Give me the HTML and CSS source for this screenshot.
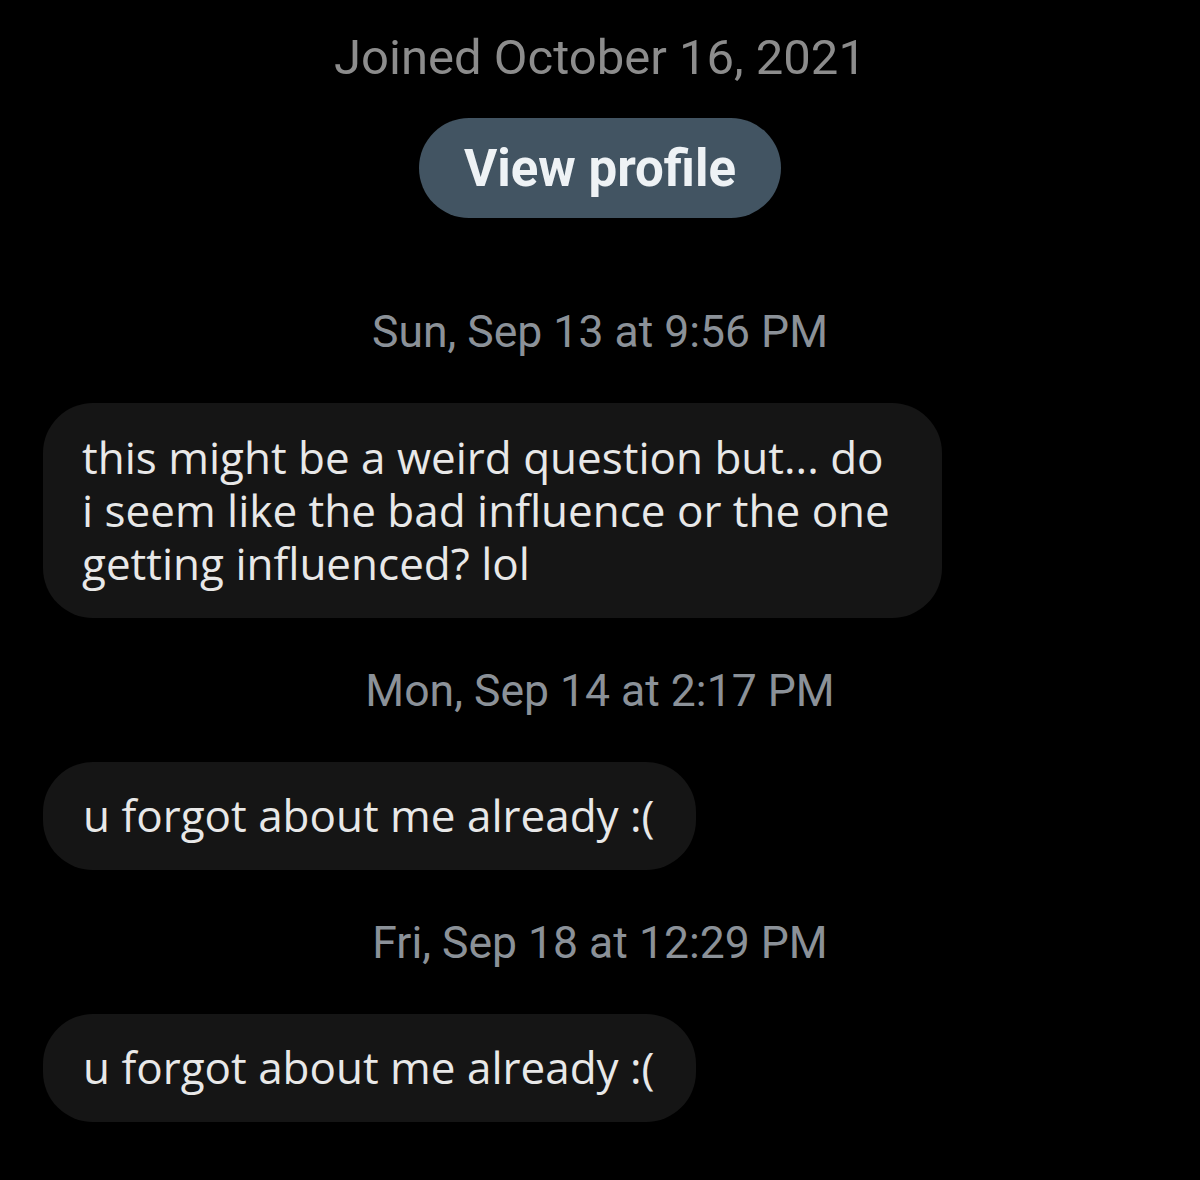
FILE: index.html
```html
<!DOCTYPE html>
<html lang="en">
<head>
<meta charset="utf-8">
<title>Messages</title>
<link rel="stylesheet" href="styles.css">
</head>
<body>
<main class="conversation">
  <section class="profile">
    <p class="joined">Joined October 16, 2021</p>
    <button class="view-profile" type="button">View profile</button>
  </section>

  <section class="thread">
    <p class="stamp stamp-first">Sun, Sep 13 at 9:56 PM</p>
    <div class="bubble bubble-wide">this might be a weird question but... do i seem like the bad influence or the one getting influenced? lol</div>

    <p class="stamp">Mon, Sep 14 at 2:17 PM</p>
    <div class="bubble">u forgot about me already :(</div>

    <p class="stamp">Fri, Sep 18 at 12:29 PM</p>
    <div class="bubble">u forgot about me already :(</div>
  </section>
</main>
</body>
</html>
```

FILE: styles.css
```css
html, body {
  margin: 0;
  padding: 0;
  background: #000;
}

body {
  width: 1200px;
  min-height: 1180px;
  font-family: Roboto, "Liberation Sans", sans-serif;
}

.conversation {
  display: flex;
  flex-direction: column;
  padding: 30px 0 0 0;
}

.profile {
  display: flex;
  flex-direction: column;
  align-items: center;
}

.joined {
  margin: 0;
  font-size: 49px;
  line-height: 56px;
  color: #8c8c8c;
  text-align: center;
}

.view-profile {
  margin-top: 32px;
  width: 362px;
  height: 100px;
  border: none;
  border-radius: 50px;
  background: #425462;
  color: #eef2f5;
  font-family: Roboto, "Liberation Sans", sans-serif;
  font-weight: 700;
  font-size: 51px;
  padding: 0;
}

.thread {
  display: flex;
  flex-direction: column;
  align-items: flex-start;
  padding-left: 43px;
}

.stamp {
  align-self: stretch;
  margin: 47px 0 45px -43px;
  font-size: 44.5px;
  line-height: 52px;
  color: #8b9198;
  text-align: center;
}

.stamp-first {
  margin-top: 88px;
}

.bubble {
  box-sizing: border-box;
  max-width: 899px;
  padding: 27px 41px 28px 40px;
  border-radius: 50px;
  background: #151515;
  color: #e8e8e8;
  font-family: "Open Sans", "Noto Sans", sans-serif;
  font-size: 44px;
  line-height: 53px;
}

.bubble-wide {
  padding: 28px 40px 28px 39px;
}
```
